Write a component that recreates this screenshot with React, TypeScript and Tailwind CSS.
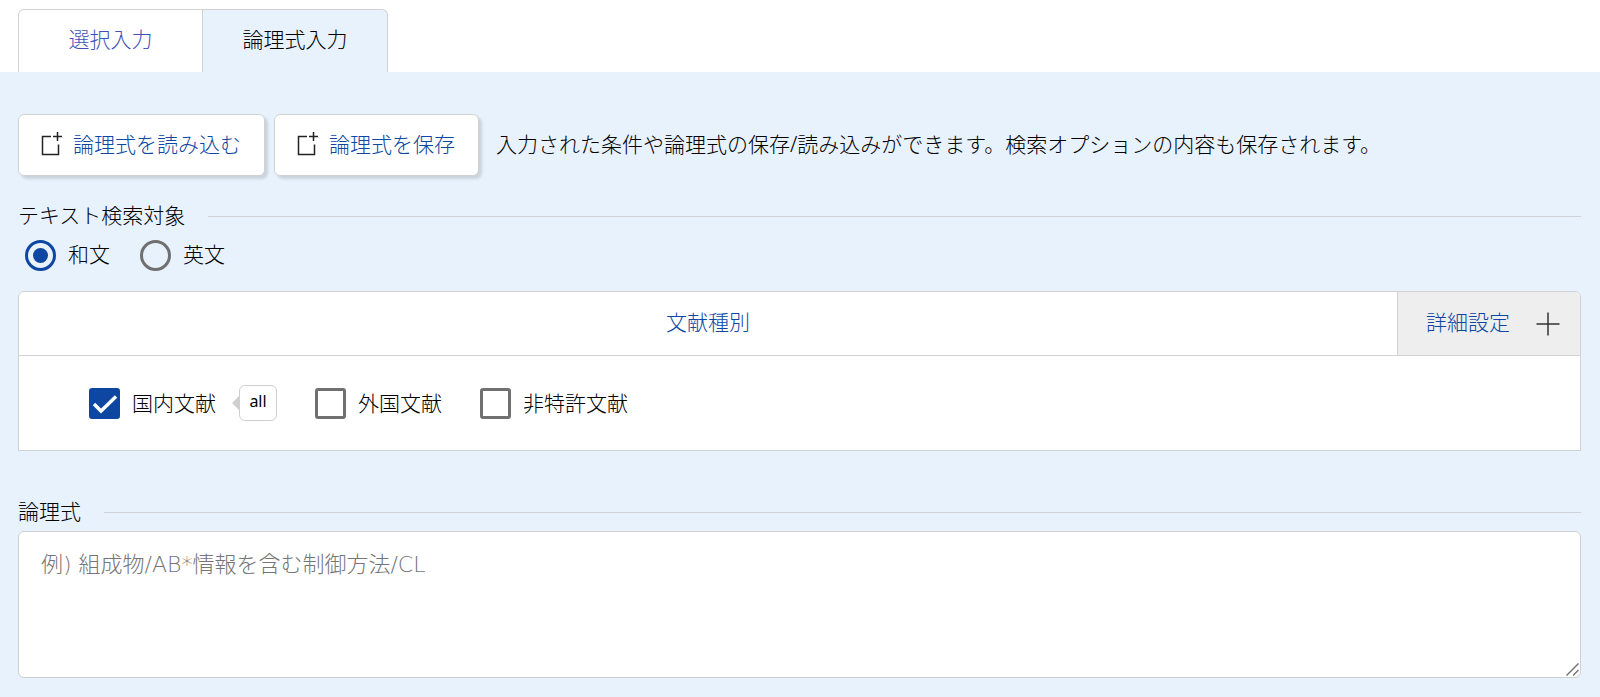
import { useState } from "react";
import type { ReactNode } from "react";
import clsx from "clsx";

type Tab = "select" | "formula";

const TABS: { id: Tab; label: string }[] = [
  { id: "select", label: "選択入力" },
  { id: "formula", label: "論理式入力" },
];

function FileAddIcon() {
  return (
    <svg width="22" height="26" viewBox="0 0 22 26" fill="none" stroke="#222" strokeWidth="1.5" aria-hidden="true">
      <path d="M10 5.5H1.5V23.5H17.5V13.5" />
      <path d="M16.5 1V10M12 5.5H21" />
    </svg>
  );
}

function PlusIcon() {
  return (
    <svg width="24" height="24" viewBox="0 0 24 24" fill="none" stroke="#333" strokeWidth="1.5" aria-hidden="true">
      <path d="M12 0.5V23.5M0.5 12H23.5" />
    </svg>
  );
}

function ActionButton({ children }: { children: ReactNode }) {
  return (
    <button
      type="button"
      className="flex h-[62px] shrink-0 items-center gap-2.5 rounded-md border border-[#d2d2d2] bg-white pr-[23px] pb-0.5 pl-[22px] text-[#0d47a1] shadow-[3px_3px_3px_rgba(0,0,0,0.13)]"
    >
      <FileAddIcon />
      {children}
    </button>
  );
}

function SectionTitle({ children }: { children: ReactNode }) {
  return (
    <div className="flex h-[30px] items-center gap-[23px]">
      <h2 className="pb-0.5">{children}</h2>
      <div className="h-px flex-1 bg-[#cfd3d8]" />
    </div>
  );
}

function Radio({ label, defaultChecked }: { label: string; defaultChecked?: boolean }) {
  return (
    <label className="flex items-center gap-3">
      <input
        type="radio"
        name="lang"
        defaultChecked={defaultChecked}
        className="grid size-[31px] appearance-none place-content-center rounded-full border-[3px] border-[#707070] before:size-[15px] before:rounded-full checked:border-[#0d47a1] checked:before:bg-[#0d47a1]"
      />
      <span className="pb-0.5">{label}</span>
    </label>
  );
}

function Checkbox({ label, defaultChecked }: { label: string; defaultChecked?: boolean }) {
  return (
    <label className="flex items-center gap-3">
      <span className="grid">
        <input
          type="checkbox"
          defaultChecked={defaultChecked}
          className="peer col-start-1 row-start-1 size-[31px] appearance-none rounded-[3px] border-[3px] border-[#707070] checked:border-[#0d47a1] checked:bg-[#0d47a1]"
        />
        <svg
          className="pointer-events-none invisible col-start-1 row-start-1 peer-checked:visible"
          width="31"
          height="31"
          viewBox="0 0 31 31"
          fill="none"
          stroke="#fff"
          strokeWidth="3.4"
          aria-hidden="true"
        >
          <path d="M5 16L12 23L27 8.5" />
        </svg>
      </span>
      {label}
    </label>
  );
}

export default function App() {
  const [tab, setTab] = useState<Tab>("formula");

  return (
    <div className="min-h-screen bg-[#e8f2fc] pb-4 font-['Noto_Sans','Noto_Sans_CJK_JP',sans-serif] text-[21px] leading-[30px] font-light text-black">
      <div className="flex bg-white px-[18px] pt-[9px]" role="tablist">
        {TABS.map((t) => (
          <button
            key={t.id}
            type="button"
            role="tab"
            aria-selected={tab === t.id}
            onClick={() => setTab(t.id)}
            className={clsx(
              "h-[63px] w-[185px] border-t border-r border-[#d2d2d2] pb-1 first:rounded-tl-md first:border-l last:rounded-tr-md",
              tab === t.id ? "bg-[#e8f2fc] text-black" : "bg-white text-[#3f51b5]"
            )}
          >
            {t.label}
          </button>
        ))}
      </div>

      <main className="pt-[42px] pr-[19px] pl-[18px]">
        <div className="flex items-center gap-[9px]">
          <ActionButton>論理式を読み込む</ActionButton>
          <ActionButton>論理式を保存</ActionButton>
          <p className="ml-2 pb-0.5">
            入力された条件や論理式の保存/読み込みができます。検索オプションの内容も保存されます。
          </p>
        </div>

        <section className="mt-[25px]">
          <SectionTitle>テキスト検索対象</SectionTitle>
          <div className="mt-2 flex gap-[30px] pl-[7px]">
            <Radio label="和文" defaultChecked />
            <Radio label="英文" />
          </div>
        </section>

        <section className="mt-5 rounded-t-md border border-[#d2d2d2] bg-white">
          <div className="flex h-16 border-b border-[#d2d2d2] text-[#0d47a1]">
            <h2 className="flex flex-1 items-center justify-center pb-1">文献種別</h2>
            <button
              type="button"
              className="flex items-center gap-[26px] rounded-tr-md border-l border-[#d2d2d2] bg-[#eee] pr-5 pl-7"
            >
              <span className="pb-1">詳細設定</span>
              <PlusIcon />
            </button>
          </div>
          <div className="flex h-[94px] items-center gap-[38px] pl-[70px]">
            <div className="flex items-center gap-4">
              <Checkbox label="国内文献" defaultChecked />
              <div className="flex items-center">
                <div className="border-y-[7px] border-r-[7px] border-y-transparent border-r-[#cfcfcf]" />
                <button
                  type="button"
                  className="h-9 w-[38px] rounded-md border border-[#cfcfcf] bg-white pb-1 text-base font-normal"
                >
                  all
                </button>
              </div>
            </div>
            <Checkbox label="外国文献" />
            <Checkbox label="非特許文献" />
          </div>
        </section>

        <section className="mt-[46px]">
          <SectionTitle>
            <label htmlFor="formula">論理式</label>
          </SectionTitle>
          <div className="relative mt-1">
            <textarea
              id="formula"
              placeholder="例) 組成物/AB*情報を含む制御方法/CL"
              className="block h-[147px] w-full resize-y rounded-md border border-[#cfcfcf] bg-white px-[22px] py-[18px] font-['DejaVu_Sans','Noto_Sans_CJK_JP',sans-serif] text-[22px] placeholder:text-[#757575] [&::-webkit-resizer]:bg-transparent"
            />
            <svg
              className="pointer-events-none absolute right-0.5 bottom-0.5"
              width="13"
              height="13"
              viewBox="0 0 13 13"
              stroke="#777"
              strokeWidth="1.5"
              aria-hidden="true"
            >
              <path d="M0.5 12.5L12.5 0.5M7 12.5L12.5 7" />
            </svg>
          </div>
        </section>
      </main>
    </div>
  );
}
